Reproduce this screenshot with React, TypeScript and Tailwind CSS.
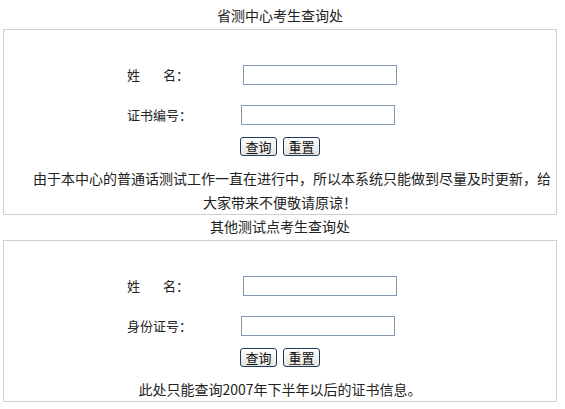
import React from "react";

const font = { fontFamily: '"Noto Sans CJK SC", "Noto Sans", sans-serif' };

function Btn({ children }: { children: React.ReactNode }) {
  return (
    <button
      type="button"
      className="w-[37px] h-[19px] rounded-[3px] border border-[#1d3b63] bg-gradient-to-b from-white to-[#e6e5de] text-[13px] leading-[17px] text-[#111] p-0 flex items-center justify-center"
    >
      {children}
    </button>
  );
}

function Row({ label, labelW, inputML }: { label: React.ReactNode; labelW: string; inputML?: string }) {
  return (
    <div className="h-[40px] flex items-center pl-[123px]">
      <div className={`${labelW} text-[13px] text-[#222] whitespace-nowrap`}>{label}</div>
      <input
        type="text"
        className={`w-[154px] h-[20px] border border-[#8498b0] bg-white outline-none ${inputML ?? ""}`}
      />
    </div>
  );
}

function Panel({
  title,
  secondLabel,
  notice,
  indent,
  titleH,
  titleLead,
}: {
  title: string;
  secondLabel: string;
  notice: string;
  indent: boolean;
  titleH: string;
  titleLead: string;
}) {
  return (
    <div>
      <div className={`${titleH} ${titleLead} text-center text-[14px] text-[#222]`}>{title}</div>
      <div className="border border-[#cfcfcf] pt-[25px]">
        <Row
          labelW="w-[116px]"
          label={
            <span>
              姓<span className="inline-block w-[23px]"></span>名：
            </span>
          }
        />
        <Row labelW="w-[114px]" label={secondLabel} />
        <div className="flex justify-center gap-[6px] mt-[2px] mb-[10px]">
          <Btn>查询</Btn>
          <Btn>重置</Btn>
        </div>
        <div
          className={`text-center text-[14px] leading-[24px] text-[#222] ${indent ? "indent-[24px]" : ""}`}
        >
          {notice}
        </div>
      </div>
    </div>
  );
}

export default function App() {
  return (
    <div className="w-[565px] h-[409px] bg-white overflow-hidden" style={font}>
      <div className="ml-[3px] w-[554px]">
        <Panel
          title="省测中心考生查询处"
          titleH="h-[29px]"
          titleLead="leading-[30px]"
          secondLabel="证书编号："
          notice="由于本中心的普通话测试工作一直在进行中，所以本系统只能做到尽量及时更新，给大家带来不便敬请原谅！"
          indent={true}
        />
        <Panel
          title="其他测试点考生查询处"
          titleH="h-[25px]"
          titleLead="leading-[22px]"
          secondLabel="身份证号："
          notice="此处只能查询2007年下半年以后的证书信息。"
          indent={false}
        />
      </div>
    </div>
  );
}
